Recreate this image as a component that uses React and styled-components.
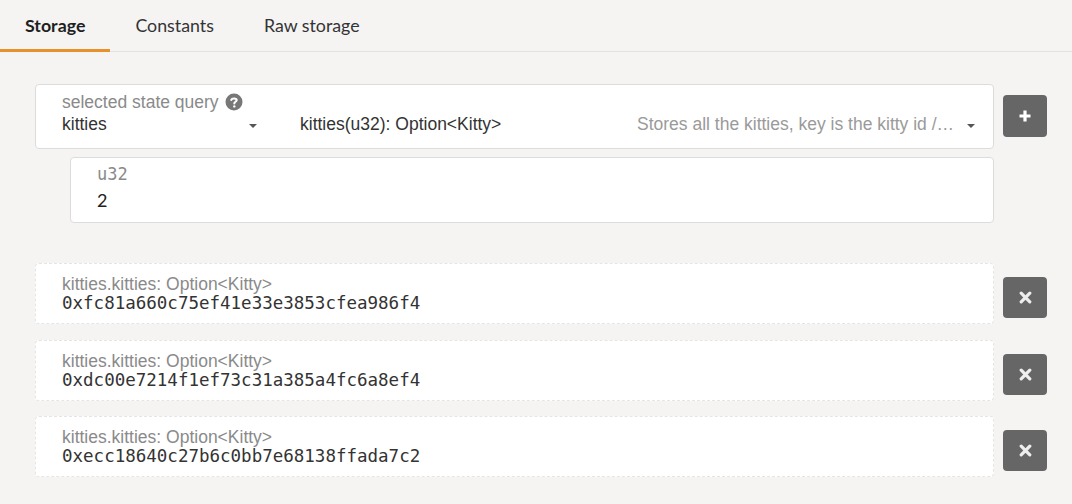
import React from 'react'
import styled, { createGlobalStyle } from 'styled-components'

const Global = createGlobalStyle`
  body {
    margin: 0;
    background: #f5f4f3;
    font-family: 'Liberation Sans', Arial, sans-serif;
  }
`;

const Page = styled.div`
  width: 1072px;
  height: 504px;
  background: #f5f4f3;
  overflow: hidden;
`;

const Tabs = styled.div`
  display: flex;
  height: 52px;
  border-bottom: 1px solid #e4e2e0;
  box-sizing: border-box;
`;

const Tab = styled.div`
  font-family: Lato, sans-serif;
  font-size: 17.8px;
  font-weight: ${p => (p.active ? 700 : 400)};
  color: ${p => (p.active ? '#1f1f1f' : '#333')};
  padding: 14px 25px 0;
  box-sizing: border-box;
  height: 52px;
  border-bottom: 3px solid ${p => (p.active ? '#e8912c' : 'transparent')};
  margin-bottom: -1px;
`;

const Content = styled.div`
  padding: 32px 24px 0 35px;
  display: flex;
  flex-direction: column;
`;

const Row = styled.div`
  display: flex;
  align-items: flex-start;
  gap: 9px;
  margin-bottom: ${p => p.mb || 0}px;
`;

const Card = styled.div`
  width: 959px;
  box-sizing: border-box;
  background: #fff;
  border: 1px solid #dedcda;
  border-radius: 4px;
`;

const QueryCard = styled(Card)`
  height: 65px;
  display: grid;
  grid-template-columns: 238px 337px 1fr;
  padding: 0 0 0 26px;
`;

const Field = styled.div`
  display: flex;
  flex-direction: column;
  justify-content: flex-end;
  padding-bottom: 14px;
  position: relative;
  padding-right: ${p => p.pr || 0}px;
  min-width: 0;
`;

const Label = styled.div`
  font-size: 17.5px;
  line-height: 20px;
  color: #8a8a8a;
  display: flex;
  align-items: center;
  gap: 6px;
  margin-bottom: 2px;
`;

const Value = styled.div`
  font-size: 17.5px;
  line-height: 20px;
  white-space: nowrap;
  color: ${p => p.muted ? '#9a9a9a' : '#333'};
`;

const Caret = styled.span`
  position: absolute;
  right: ${p => p.r}px;
  bottom: 20px;
  width: 0;
  height: 0;
  border-left: 4.5px solid transparent;
  border-right: 4.5px solid transparent;
  border-top: 4.5px solid #555;
`;

const SquareBtn = styled.div`
  width: 44px;
  height: ${p => p.h}px;
  margin-top: ${p => p.mt}px;
  background: #666;
  border-radius: 4px;
  display: flex;
  align-items: center;
  justify-content: center;
`;

const ParamCard = styled(Card)`
  margin-left: 35px;
  width: 924px;
  height: 66px;
  padding: 6px 26px 0;
`;

const Mono = styled.div`
  font-family: 'DejaVu Sans Mono', monospace;
  font-size: ${p => p.size || 17.5}px;
  line-height: 20px;
  color: ${p => p.color || '#333'};
`;

const ParamValue = styled.div`
  font-family: Lato, sans-serif;
  font-size: 18px;
  color: #222;
  margin-top: 5px;
`;

const ResultCard = styled.div`
  width: 959px;
  height: 61px;
  box-sizing: border-box;
  background: #fff;
  border: 1px dashed #e6e5e3;
  border-radius: 4px;
  padding: 11px 26px 0;
`;

const ResultLabel = styled.div`
  font-size: 17.5px;
  color: #8a8a8a;
  line-height: 18px;
`;

const HelpIcon = () => (
  <svg width="18" height="18" viewBox="0 0 18 18">
    <circle cx="9" cy="9" r="8.5" fill="#777" />
    <path d="M6.3 7 C6.3 4.9 11.7 4.9 11.7 7.1 C11.7 8.8 9.3 8.7 9.3 10.5" stroke="#fff" strokeWidth="2.1" fill="none" strokeLinecap="round" />
    <circle cx="9.3" cy="13.4" r="1.2" fill="#fff" />
  </svg>
);

const PlusIcon = () => (
  <svg width="14" height="14" viewBox="0 0 14 14">
    <path d="M7 1.5v11M1.5 7h11" stroke="#fff" strokeWidth="3.2" />
  </svg>
);

const CloseIcon = () => (
  <svg width="13" height="13" viewBox="0 0 13 13">
    <path d="M2.2 2.2l8.6 8.6M10.8 2.2l-8.6 8.6" stroke="#eee" strokeWidth="3.2" strokeLinecap="round" />
  </svg>
);

const results = [
  '0xfc81a660c75ef41e33e3853cfea986f4',
  '0xdc00e7214f1ef73c31a385a4fc6a8ef4',
  '0xecc18640c27b6c0bb7e68138ffada7c2',
];

export default function App() {
  return (
    <Page>
      <Global />
      <Tabs>
        <Tab active>Storage</Tab>
        <Tab>Constants</Tab>
        <Tab>Raw storage</Tab>
      </Tabs>
      <Content>
        <Row mb={8}>
          <QueryCard>
            <Field pr={40}>
              <Label>selected state query <HelpIcon /></Label>
              <Value>kitties</Value>
              <Caret r={43} />
            </Field>
            <Field>
              <Value>kitties(u32): Option&lt;Kitty&gt;</Value>
            </Field>
            <Field pr={41}>
              <Value muted>Stores all the kitties, key is the kitty id /…</Value>
              <Caret r={18} />
            </Field>
          </QueryCard>
          <SquareBtn mt={11} h={42}><PlusIcon /></SquareBtn>
        </Row>
        <Row mb={40}>
          <ParamCard>
            <Mono size={17} color="#8a8a8a">u32</Mono>
            <ParamValue>2</ParamValue>
          </ParamCard>
        </Row>
        {results.map(r => (
          <Row key={r} mb={15.5}>
            <ResultCard>
              <ResultLabel>kitties.kitties: Option&lt;Kitty&gt;</ResultLabel>
              <Mono>{r}</Mono>
            </ResultCard>
            <SquareBtn mt={14} h={41}><CloseIcon /></SquareBtn>
          </Row>
        ))}
      </Content>
    </Page>
  )
}
